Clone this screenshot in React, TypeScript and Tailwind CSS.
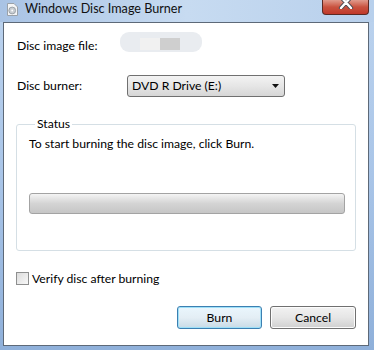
import { useState } from 'react'

const font = { fontFamily: 'Lato, "Noto Sans", Arial, sans-serif' }

function TitleIcon() {
  return (
    <svg width="12" height="13" viewBox="0 0 12 13">
      <path d="M1.5 0.5h6.5l3.5 3.5v8.5h-10z" fill="#f4f5f6" stroke="#9aa1a8" />
      <circle cx="6.2" cy="7.5" r="3.4" fill="#c9ced3" stroke="#8e959c" strokeWidth="0.8" />
      <circle cx="6.2" cy="7.5" r="0.9" fill="#ffffff" />
    </svg>
  )
}

function CloseButton() {
  return (
    <div className="w-[47px] h-[15px] rounded-b-[4px] border border-t-0 border-[#5b2a24] bg-gradient-to-b from-[#e09a8c] via-[#c9523f] to-[#c0392b] flex justify-center overflow-hidden">
      <svg width="16" height="9" viewBox="0 0 16 9">
        <path d="M3 -3 L13 8 M13 -3 L3 8" stroke="#4a4a52" strokeWidth="4.2" strokeLinecap="round" />
        <path d="M3 -3 L13 8 M13 -3 L3 8" stroke="#ffffff" strokeWidth="2.4" strokeLinecap="round" />
      </svg>
    </div>
  )
}

export default function App() {
  const [verify, setVerify] = useState(false)

  return (
    <div
      className="w-[374px] h-[350px] flex flex-col overflow-hidden bg-gradient-to-b from-[#bcd3ee] via-[#a9c5e8] to-[#8fb0da] text-[12.2px] text-black"
      style={font}
    >
      <div className="h-[22px] flex items-start shrink-0 pl-[6px] pr-[5px] bg-gradient-to-r from-[#a9c3e4] via-[#c7dbf1] to-[#b8d0ec]">
        <div className="mt-[3px]"><TitleIcon /></div>
        <div className="ml-[7px] text-[12.6px] leading-[16px] mt-[1px] text-[#101010]">Windows Disc Image Burner</div>
        <div className="ml-auto"><CloseButton /></div>
      </div>

      <div className="ml-[3px] mr-[5px] mb-[4px] flex-1 bg-white border border-[#5d6978] flex flex-col">
        <div className="mt-[9px] h-[20px] flex items-start pl-[13px]">
          <div className="w-[103px] leading-[16px] mt-[6px]">Disc image file:</div>
          <div className="w-[82px] h-[20px] rounded-[9px] bg-[#e9ecf0] flex items-end pl-[20px] pb-[2px]">
            <div className="w-[20px] h-[12px] bg-[#f1f1f1]" />
            <div className="w-[20px] h-[12px] bg-[#cfcfcf]" />
          </div>
        </div>

        <div className="mt-[23px] h-[22px] flex items-center pl-[13px]">
          <div className="w-[110px] leading-[16px]">Disc burner:</div>
          <div className="w-[158px] h-[22px] rounded-[3px] border border-[#707070] bg-gradient-to-b from-[#f3f3f3] via-[#e6e6e6] to-[#d6d6d6] flex items-center pl-[4px] pr-[5px]">
            <span className="leading-[16px]">DVD R Drive (E:)</span>
            <svg className="ml-auto" width="7" height="4" viewBox="0 0 7 4">
              <path d="M0 0h7L3.5 4z" fill="#111" />
            </svg>
          </div>
        </div>

        <fieldset className="mt-[19px] ml-[12px] w-[340px] border border-[#d5dfe5] rounded-[3px] pl-[12px] pb-[36px]">
          <legend className="ml-[6px] px-[2px] leading-[16px]">Status</legend>
          <div className="mt-[4px] leading-[16px]">To start burning the disc image, click Burn.</div>
          <div className="mt-[41px] w-[316px] h-[21px] rounded-[3px] border border-[#a3a3a3] bg-gradient-to-b from-[#f4f4f4] via-[#d4d4d4] to-[#c6c6c6]" />
        </fieldset>

        <label className="mt-[21px] ml-[12px] h-[13px] flex items-center">
          <input type="checkbox" checked={verify} onChange={() => setVerify(!verify)} className="sr-only" />
          <span className="w-[13px] h-[13px] border border-[#8e8f8f] bg-gradient-to-br from-[#dcdcdc] to-[#f8f8f8] shrink-0" />
          <span className="ml-[3px] leading-[16px]">Verify disc after burning</span>
        </label>

        <div className="mt-[21px] flex justify-end gap-[8px] pr-[12px]">
          <button className="w-[85px] h-[23px] rounded-[3px] border border-[#3c7fb1] bg-gradient-to-b from-[#eaf6fd] via-[#e4eef5] to-[#c9dbe6] shadow-[inset_0_0_0_1px_#9ee0f8] leading-[16px]">
            Burn
          </button>
          <button className="w-[86px] h-[23px] rounded-[3px] border border-[#707070] bg-gradient-to-b from-[#f2f2f2] via-[#e6e6e6] to-[#d0d0d0] shadow-[inset_0_0_0_1px_#fcfcfc] leading-[16px]">
            Cancel
          </button>
        </div>
      </div>
    </div>
  )
}
